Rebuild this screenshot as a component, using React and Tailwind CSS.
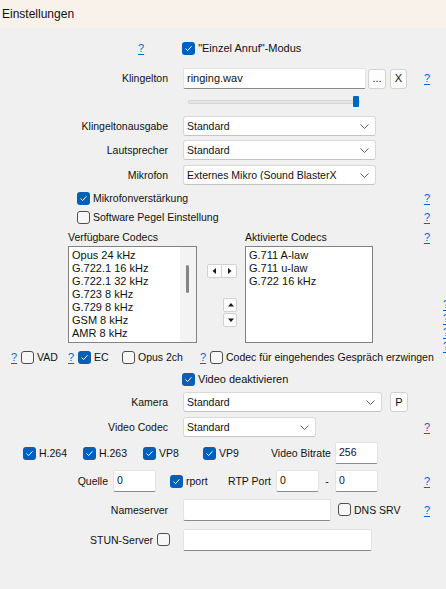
import React from "react";

const F = "font-['Liberation_Sans',Arial,sans-serif]";

function CB({ checked }) {
  if (checked) {
    return (
      <span className="inline-flex w-[13px] h-[13px] shrink-0 rounded-[3px] bg-[#005fb8] items-center justify-center">
        <svg width="9" height="9" viewBox="0 0 9 9">
          <path d="M1.8 4.8 L3.6 6.6 L7.2 2.6" fill="none" stroke="#ffffff" strokeWidth="1" strokeLinecap="round" strokeLinejoin="round" />
        </svg>
      </span>
    );
  }
  return <span className="inline-block w-[13px] h-[13px] shrink-0 rounded-[3px] border border-[#4f4f4f] bg-[#f7f7f7]" />;
}

function Q({ className = "" }) {
  return <span className={"text-[#0066cc] underline underline-offset-[2px] leading-none text-[11px] " + className}>?</span>;
}

function Select({ w, text }) {
  return (
    <div className={"h-[20px] bg-white border border-[#d9d9d9] border-b-[#c4c4c4] rounded-[3px] flex items-center pl-[3px] pr-[6px] " + w}>
      <span className="flex-1 truncate">{text}</span>
      <svg width="9" height="5" viewBox="0 0 9 5">
        <path d="M0.5 0.5 L4.5 4.5 L8.5 0.5" fill="none" stroke="#5f5f5f" strokeWidth="1" />
      </svg>
    </div>
  );
}

function Input({ w, text = "", h = "h-[22px]" }) {
  return (
    <div className={"bg-white border border-[#e3e3e3] border-b-[#8a8a8a] rounded-[2px] pl-[3px] pt-[2px] leading-[14px] " + w + " " + h}>
      {text}
    </div>
  );
}

function Btn({ children, w }) {
  return (
    <div className={"h-[20px] bg-[#fdfdfd] border border-[#d2d2d2] rounded-[3px] flex items-center justify-center text-[11px] " + w}>
      {children}
    </div>
  );
}

function Tri({ dir }) {
  const d = {
    left: "M5 1 L1.5 4 L5 7 Z",
    right: "M2 1 L5.5 4 L2 7 Z",
    up: "M1 5.5 L4 2 L7 5.5 Z",
    down: "M1 2.5 L4 6 L7 2.5 Z",
  }[dir];
  return (
    <svg width="7" height="8" viewBox="0 0 7 8">
      <path d={d} fill="#1a1a1a" />
    </svg>
  );
}

const Label = ({ children, w = "w-[168px]" }) => <div className={"text-right shrink-0 " + w}>{children}</div>;

export default function App() {
  const avail = ["Opus 24 kHz", "G.722.1 16 kHz", "G.722.1 32 kHz", "G.723 8 kHz", "G.729 8 kHz", "GSM 8 kHz", "AMR 8 kHz", "AMR-WB 16 kHz"];
  const active = ["G.711 A-law", "G.711 u-law", "G.722 16 kHz"];
  return (
    <div className={"relative w-[446px] h-[589px] overflow-hidden bg-[#f0f0f0] text-[#111] text-[10.5px] leading-none " + F}>
      <div className="h-[28px] bg-[#f9f2ea] flex items-center pl-[2px] text-[12px]">Einstellungen</div>

      {/* Einzel Anruf */}
      <div className="mt-[13px] h-[14px] flex items-center">
        <div className="w-[138px]" />
        <Q />
        <div className="w-[38px]" />
        <CB checked />
        <span className="ml-[3px] text-[11px]">"Einzel Anruf"-Modus</span>
      </div>

      {/* Klingelton */}
      <div className="mt-[13px] h-[21px] flex items-center">
        <Label>Klingelton</Label>
        <div className="ml-[15px]"><Input w="w-[183px]" h="h-[21px]" text={<span className="text-[11px]">ringing.wav</span>} /></div>
        <div className="ml-[2px]"><Btn w="w-[18px]">...</Btn></div>
        <div className="ml-[4px]"><Btn w="w-[17px]">X</Btn></div>
        <Q className="ml-[17px]" />
      </div>

      {/* slider */}
      <div className="mt-[7px] h-[11px] flex items-center pl-[188px]">
        <div className="w-[172px] h-[4px] bg-[#e6e6e6] border border-[#d6d6d6] rounded-[1px] relative">
          <div className="absolute right-0 top-[-5px] w-[6px] h-[11px] bg-[#0067c0] rounded-[1px]" />
        </div>
      </div>

      <div className="mt-[9px] h-[20px] flex items-center">
        <Label>Klingeltonausgabe</Label>
        <div className="ml-[15px]"><Select w="w-[193px]" text="Standard" /></div>
      </div>
      <div className="mt-[4px] h-[20px] flex items-center">
        <Label>Lautsprecher</Label>
        <div className="ml-[15px]"><Select w="w-[193px]" text="Standard" /></div>
      </div>
      <div className="mt-[5px] h-[20px] flex items-center">
        <Label>Mikrofon</Label>
        <div className="ml-[15px]"><Select w="w-[193px]" text="Externes Mikro (Sound BlasterX" /></div>
      </div>

      <div className="mt-[7px] h-[13px] flex items-center pl-[77px]">
        <CB checked />
        <span className="ml-[3px]">Mikrofonverstärkung</span>
        <Q className="ml-auto mr-[16px]" />
      </div>
      <div className="mt-[6px] h-[13px] flex items-center pl-[77px]">
        <CB />
        <span className="ml-[3px]">Software Pegel Einstellung</span>
        <Q className="ml-auto mr-[16px]" />
      </div>

      <div className="mt-[7px] h-[12px] flex items-center pl-[68px]">
        <span className="w-[177px]">Verfügbare Codecs</span>
        <span>Aktivierte Codecs</span>
        <Q className="ml-auto mr-[16px]" />
      </div>

      {/* listboxes */}
      <div className="mt-[3px] h-[97px] flex pl-[68px]">
        <div className="w-[129px] h-[97px] bg-white border border-[#828282] flex overflow-hidden">
          <div className={"flex-1 pl-[3px] pt-[2px] text-[11px] leading-[13px] " + F}>
            {avail.map((a) => (
              <div key={a} className="whitespace-nowrap">{a}</div>
            ))}
          </div>
          <div className="w-[16px] bg-[#f3f3f3] relative">
            <div className="absolute left-[6px] top-[18px] w-[3px] h-[28px] rounded-[2px] bg-[#858585]" />
          </div>
        </div>
        <div className="w-[48px] flex flex-col">
          <div className="mt-[18px] ml-[10px] flex">
            <div className="w-[15px] h-[14px] bg-[#fdfdfd] border border-[#d2d2d2] rounded-l-[2px] flex items-center justify-center"><Tri dir="left" /></div>
            <div className="w-[15px] h-[14px] bg-[#fdfdfd] border border-l-0 border-[#d2d2d2] rounded-r-[2px] flex items-center justify-center"><Tri dir="right" /></div>
          </div>
          <div className="mt-[20px] ml-[26px] w-[14px] h-[14px] bg-[#fdfdfd] border border-[#d2d2d2] rounded-[2px] flex items-center justify-center"><Tri dir="up" /></div>
          <div className="mt-[1px] ml-[26px] w-[14px] h-[14px] bg-[#fdfdfd] border border-[#d2d2d2] rounded-[2px] flex items-center justify-center"><Tri dir="down" /></div>
        </div>
        <div className="w-[128px] h-[97px] bg-white border border-[#828282] pl-[3px] pt-[2px] text-[11px] leading-[13px]">
          {active.map((a) => (
            <div key={a} className="whitespace-nowrap">{a}</div>
          ))}
        </div>
      </div>

      {/* right edge partial ? marks (clipped by window edge) */}
      <div className="absolute left-[443px] top-[299px] flex flex-col gap-[3px] leading-[10px]">
        <Q />
        <Q />
        <Q />
        <Q />
      </div>

      {/* VAD row */}
      <div className="mt-[8px] h-[13px] flex items-center pl-[11px]">
        <div className="w-[10px]"><Q /></div>
        <div className="w-[47px] flex items-center"><CB /><span className="ml-[3px]">VAD</span></div>
        <div className="w-[10px]"><Q /></div>
        <div className="w-[44px] flex items-center"><CB checked /><span className="ml-[3px]">EC</span></div>
        <div className="w-[78px] flex items-center"><CB /><span className="ml-[3px]">Opus 2ch</span></div>
        <div className="w-[10px]"><Q /></div>
        <div className="flex items-center whitespace-nowrap"><CB /><span className="ml-[3px]">Codec für eingehendes Gespräch erzwingen</span></div>
      </div>

      <div className="mt-[9px] h-[13px] flex items-center pl-[182px]">
        <CB checked />
        <span className="ml-[3px] text-[11px]">Video deaktivieren</span>
      </div>

      <div className="mt-[6px] h-[20px] flex items-center">
        <Label>Kamera</Label>
        <div className="ml-[15px]"><Select w="w-[199px]" text="Standard" /></div>
        <div className="ml-[8px]"><Btn w="w-[18px]">P</Btn></div>
      </div>
      <div className="mt-[5px] h-[20px] flex items-center">
        <Label>Video Codec</Label>
        <div className="ml-[15px]"><Select w="w-[133px]" text="Standard" /></div>
        <Q className="ml-auto mr-[16px]" />
      </div>

      {/* video codecs */}
      <div className="mt-[5px] h-[22px] flex items-center pl-[23px]">
        <div className="w-[60px] flex items-center"><CB checked /><span className="ml-[3px]">H.264</span></div>
        <div className="w-[60px] flex items-center"><CB checked /><span className="ml-[3px]">H.263</span></div>
        <div className="w-[60px] flex items-center"><CB checked /><span className="ml-[3px]">VP8</span></div>
        <div className="w-[68px] flex items-center"><CB checked /><span className="ml-[3px]">VP9</span></div>
        <div className="w-[64px]">Video Bitrate</div>
        <Input w="w-[43px]" text="256" />
      </div>

      {/* Quelle */}
      <div className="mt-[6px] h-[22px] flex items-center">
        <Label w="w-[108px]">Quelle</Label>
        <div className="ml-[5px]"><Input w="w-[43px]" text="0" /></div>
        <div className="ml-[14px]"><CB checked /></div>
        <div className="w-[45px] pl-[3px]">rport</div>
        <div className="w-[48px]">RTP Port</div>
        <Input w="w-[43px]" text="0" />
        <div className="w-[16px] text-center">-</div>
        <Input w="w-[43px]" text="0" />
        <Q className="ml-auto mr-[16px]" />
      </div>

      <div className="mt-[7px] h-[22px] flex items-center">
        <Label>Nameserver</Label>
        <div className="ml-[15px]"><Input w="w-[148px]" /></div>
        <div className="ml-[7px]"><CB /></div>
        <span className="ml-[3px]">DNS SRV</span>
        <Q className="ml-auto mr-[16px]" />
      </div>

      <div className="mt-[8px] h-[22px] flex items-center">
        <Label w="w-[153px]">STUN-Server</Label>
        <div className="ml-[4px]"><CB /></div>
        <div className="ml-[13px]"><Input w="w-[189px]" /></div>
      </div>
    </div>
  );
}
